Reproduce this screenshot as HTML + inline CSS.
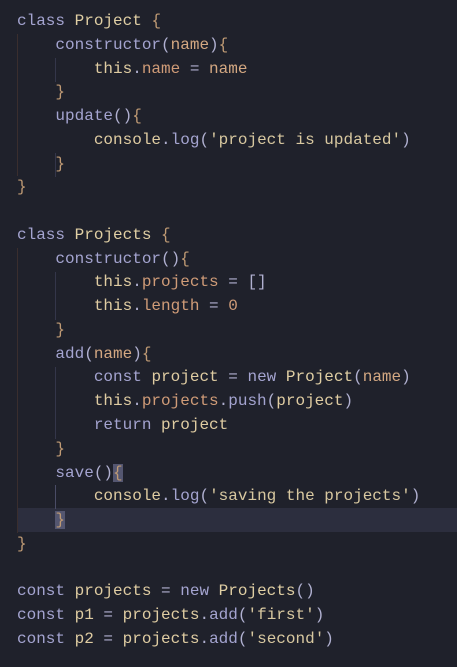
<!DOCTYPE html>
<html><head><style>
html,body{margin:0;padding:0;background:#1f212b;width:457px;height:667px;overflow:hidden}
pre{margin:0;position:absolute;top:10px;left:17px;font-family:"Liberation Mono",monospace;font-size:16px;line-height:23.77px;color:#b0b0d0}
.k{color:#a4a4d0}.c{color:#e0cfa4}.v{color:#dfcca2}.p{color:#d09c78}.m{color:#a4a4d0}.s{color:#d8c8a0}.b{color:#bf9a74}.n{color:#d4a882}
.hl{position:absolute;left:17px;right:0;top:508px;height:24px;background:#2c2e3e}
.g{position:absolute;width:1px;background:#34364a}
.cur{background:#545670}
</style></head><body>
<div class="hl"></div>
<div class="g" style="left:17px;top:34px;height:142px;background:#3a2e2e"></div>
<div class="g" style="left:55px;top:58px;height:24px"></div>
<div class="g" style="left:55px;top:153px;height:24px"></div>
<div class="g" style="left:17px;top:248px;height:285px;background:#3a2e2e"></div>
<div class="g" style="left:55px;top:272px;height:48px"></div>
<div class="g" style="left:55px;top:367px;height:72px"></div>
<div class="g" style="left:55px;top:485px;height:24px;background:#4a4c66"></div>
<pre><span class="k">class</span> <span class="c">Project</span> <span class="b">{</span>
    <span class="m">constructor</span>(<span class="n">name</span>)<span class="b">{</span>
        <span class="v">this</span>.<span class="p">name</span> = <span class="n">name</span>
    <span class="b">}</span>
    <span class="m">update</span>()<span class="b">{</span>
        <span class="v">console</span>.<span class="m">log</span>(<span class="s">'project is updated'</span>)
    <span class="b">}</span>
<span class="b">}</span>

<span class="k">class</span> <span class="c">Projects</span> <span class="b">{</span>
    <span class="m">constructor</span>()<span class="b">{</span>
        <span class="v">this</span>.<span class="p">projects</span> = []
        <span class="v">this</span>.<span class="p">length</span> = <span class="p">0</span>
    <span class="b">}</span>
    <span class="m">add</span>(<span class="n">name</span>)<span class="b">{</span>
        <span class="k">const</span> <span class="v">project</span> = <span class="k">new</span> <span class="c">Project</span>(<span class="n">name</span>)
        <span class="v">this</span>.<span class="p">projects</span>.<span class="m">push</span>(<span class="v">project</span>)
        <span class="k">return</span> <span class="v">project</span>
    <span class="b">}</span>
    <span class="m">save</span>()<span class="b cur">{</span>
        <span class="v">console</span>.<span class="m">log</span>(<span class="s">'saving the projects'</span>)
    <span class="b cur">}</span>
<span class="b">}</span>

<span class="k">const</span> <span class="v">projects</span> = <span class="k">new</span> <span class="c">Projects</span>()
<span class="k">const</span> <span class="v">p1</span> = <span class="v">projects</span>.<span class="m">add</span>(<span class="s">'first'</span>)
<span class="k">const</span> <span class="v">p2</span> = <span class="v">projects</span>.<span class="m">add</span>(<span class="s">'second'</span>)</pre>
</body></html>
